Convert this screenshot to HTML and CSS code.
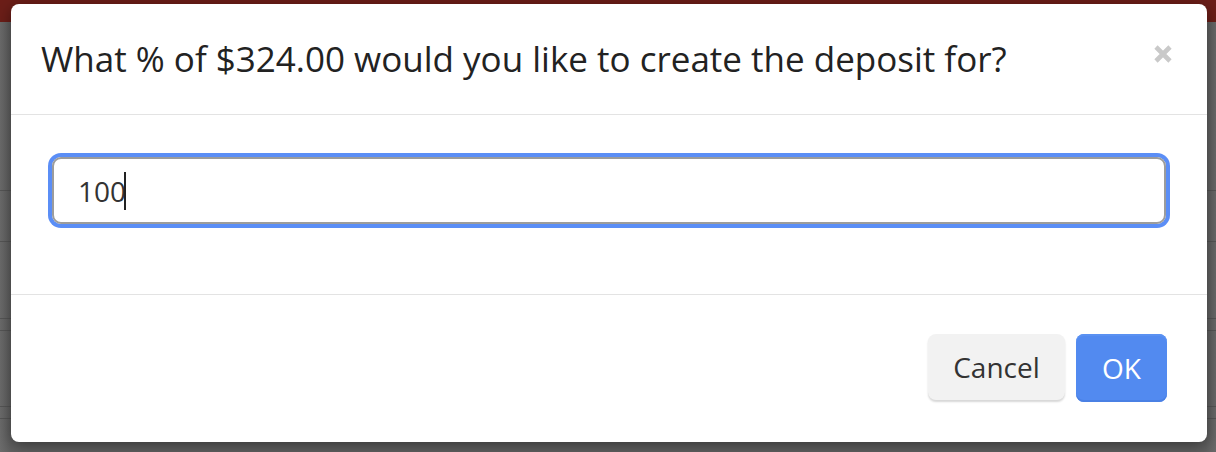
FILE: index.html
```html
<!DOCTYPE html>
<html lang="en">
<head>
<meta charset="utf-8">
<title>Deposit</title>
<link rel="stylesheet" href="styles.css">
</head>
<body>
<div class="backdrop">
  <div class="modal" role="dialog">
    <div class="modal-header">
      <h4 class="modal-title">What % of $324.00 would you like to create the deposit for?</h4>
      <button class="close" aria-label="Close">
        <svg width="20" height="20" viewBox="0 0 20 20"><path d="M3 3 L17 17 M17 3 L3 17" stroke="#c9c9c9" stroke-width="4.6" stroke-linecap="butt"/></svg>
      </button>
    </div>
    <div class="modal-body">
      <div class="input"><span class="value">100</span><span class="caret"></span></div>
    </div>
    <div class="modal-footer">
      <button class="btn btn-default">Cancel</button>
      <button class="btn btn-primary">OK</button>
    </div>
  </div>
</div>
</body>
</html>
```
FILE: styles.css
```css
html, body {
  margin: 0;
  padding: 0;
}
body {
  font-family: "Open Sans", "Liberation Sans", sans-serif;
  width: 1216px;
  height: 452px;
  overflow: hidden;
}
.backdrop {
  box-sizing: border-box;
  height: 452px;
  padding: 4px 9px 10px 11px;
  background:
    linear-gradient(#6c1e18, #6c1e18) 0 0 / 100% 22px no-repeat,
    linear-gradient(#565656, #565656) 0 190px / 100% 1px no-repeat,
    linear-gradient(#565656, #565656) 0 241px / 100% 1px no-repeat,
    linear-gradient(#565656, #565656) 0 318px / 100% 1px no-repeat,
    linear-gradient(#565656, #565656) 0 330px / 100% 1px no-repeat,
    linear-gradient(#565656, #565656) 0 406px / 100% 1px no-repeat,
    linear-gradient(#565656, #565656) 0 418px / 100% 1px no-repeat,
    linear-gradient(to right, #6c6c6c, #626262 10px, #626262 1206px, #6a6a6a);
}
.modal {
  background: #fff;
  border-radius: 8px;
  box-shadow: 0 4px 16px rgba(0, 0, 0, 0.45);
  overflow: hidden;
}
.modal-header {
  display: flex;
  justify-content: space-between;
  align-items: flex-start;
  padding: 29px 30px 30px 30px;
  border-bottom: 1px solid #e3e3e3;
}
.modal-title {
  margin: 0;
  font-size: 35px;
  line-height: 51px;
  font-weight: 400;
  color: #222;
}
.close {
  margin: 11px 4px 0 0;
  padding: 0;
  border: 0;
  background: none;
  width: 20px;
  height: 20px;
  display: block;
}
.close svg {
  display: block;
}
.modal-body {
  padding: 42px 41px 70px 41px;
  border-bottom: 1px solid #e3e3e3;
}
.input {
  box-sizing: border-box;
  height: 67px;
  border: 2px solid #9c9c9c;
  border-radius: 9px;
  box-shadow: 0 0 0 4px #5b8ef6;
  padding: 0 24px;
  display: flex;
  align-items: center;
  font-size: 28px;
  line-height: 40px;
  color: #333;
}
.caret {
  display: inline-block;
  width: 2px;
  height: 38px;
  background: #222;
  margin-left: -2px;
}
.modal-footer {
  display: flex;
  justify-content: flex-end;
  gap: 11px;
  padding: 39px 40px 40px 40px;
}
.btn {
  box-sizing: border-box;
  height: 68px;
  border-radius: 8px;
  font-family: "Open Sans", "Liberation Sans", sans-serif;
  font-size: 28px;
  line-height: 40px;
  padding: 12px 24px;
  border: 0;
}
.btn-default {
  width: 137px;
  height: 66px;
  background: #f2f2f2;
  color: #333;
  box-shadow: 0 2px 2px rgba(0, 0, 0, 0.16);
}
.btn-primary {
  width: 91px;
  background: #528af0;
  color: #fff;
  box-shadow: inset 0 -2px 0 #4a80e4, inset 0 2px 0 #5a91f2;
}
```
